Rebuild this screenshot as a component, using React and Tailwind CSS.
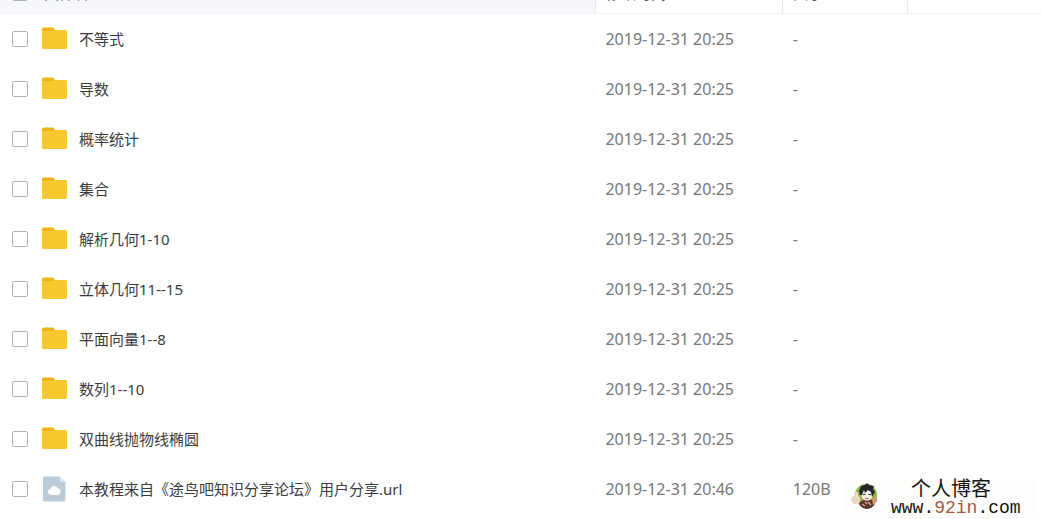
import React from 'react';

const files = [
  { name: '不等式', date: '2019-12-31 20:25', size: '-' },
  { name: '导数', date: '2019-12-31 20:25', size: '-' },
  { name: '概率统计', date: '2019-12-31 20:25', size: '-' },
  { name: '集合', date: '2019-12-31 20:25', size: '-' },
  { name: '解析几何1-10', date: '2019-12-31 20:25', size: '-' },
  { name: '立体几何11--15', date: '2019-12-31 20:25', size: '-' },
  { name: '平面向量1--8', date: '2019-12-31 20:25', size: '-' },
  { name: '数列1--10', date: '2019-12-31 20:25', size: '-' },
  { name: '双曲线抛物线椭圆', date: '2019-12-31 20:25', size: '-' },
  { name: '本教程来自《途鸟吧知识分享论坛》用户分享.url', date: '2019-12-31 20:46', size: '120B', type: 'url' },
];

const FolderIcon = () => (
  <svg className="w-[26px] h-[26px] shrink-0" viewBox="0 0 26 26" aria-hidden="true">
    <path d="M0 3.5Q0 1.5 2 1.5H10.5Q11.5 1.5 12.1 2.6L13 4.5V8H0Z" fill="#ecb50c" />
    <path d="M0 5H11.5L12.8 4H23.5Q25 4 25 5.5V21.5Q25 23 23.5 23H1.5Q0 23 0 21.5Z" fill="#f7c92c" />
  </svg>
);

const FileIcon = () => (
  <svg className="w-[26px] h-[26px] shrink-0" viewBox="0 0 26 26" aria-hidden="true">
    <path d="M1 2Q1 0.5 2.5 0.5H18L23.5 6V24Q23.5 25.5 22 25.5H2.5Q1 25.5 1 24Z" fill="#bccbd8" />
    <path d="M18 0.5L23.5 6H19.5Q18 6 18 4.5Z" fill="#dfe8ef" />
    <path d="M8.8 19A3.1 3.1 0 0 1 8.3 12.9A4.1 4.1 0 0 1 15.9 12.3A3.4 3.4 0 0 1 15.7 19Z" fill="#fff" />
  </svg>
);

const Checkbox = ({ label }) => (
  <input
    type="checkbox"
    aria-label={label}
    className="appearance-none size-4 shrink-0 rounded-[2px] border border-[#aeb3ba] bg-white checked:bg-blue-500"
  />
);

// Cartoon portrait in front of a green disc
const Avatar = () => (
  <svg className="w-7 h-7 shrink-0" viewBox="0 0 28 28" aria-hidden="true">
    <circle cx="15" cy="13" r="11" fill="#8fb63c" />
    <path d="M9 20Q14 16 22 18L24 22Q21 27 15 27Q10 26 8 22Z" fill="#58352b" />
    <path d="M21 17L26 15L26 20L22 23Z" fill="#d29a72" />
    <path d="M11 22L14 24M17 20L20 23M14 20L16 22" stroke="#d8a78d" strokeWidth="1.5" />
    <ellipse cx="16" cy="12.5" rx="5.8" ry="6.2" fill="#f3eeea" />
    <path d="M9 13L8 9L10 4L14 3L16 1L18 3L23 4L22 7L24 10L21 15L20 10L17 8L14 11L13 8L11 13Z" fill="#25262c" />
    <path d="M12 12.5H14.5M17.5 12.5H20" stroke="#303030" strokeWidth="1.2" />
    <path d="M14 16Q16 18 18 16" stroke="#a35d50" fill="none" />
    <path d="M4 10Q6 9 7 11L7 14Q10 15 9 19Q8 22 4 22Q0 20 1 16Q2 14 4 14Z" fill="#eee0cc" stroke="#cdbb9f" strokeWidth="0.6" />
    <path d="M2 17H7M2 19H7" stroke="#d8c5ac" strokeWidth="0.6" />
  </svg>
);

const Watermark = () => (
  <div className="absolute right-1 bottom-0 flex items-start w-[194px] h-10 pl-2 bg-[#fdfdfc]">
    <div className="pt-1">
      <Avatar />
    </div>
    <div className="flex flex-col pl-2 text-[#151515] whitespace-nowrap">
      <span className="pl-6 text-[20px] leading-5 font-[Noto_Sans_CJK_SC,sans-serif]">
        个人博客
      </span>
      <a href="http://www.92in.com" className="pl-1 text-[18px] leading-5 font-[Liberation_Mono,monospace]">
        www.<span className="text-[#9c5c44]">92in</span>.com
      </a>
    </div>
  </div>
);

const HeadCell = ({ children, className }) => (
  <div className={`flex items-end h-[13px] pb-[10px] overflow-hidden leading-5 ${className}`}>
    {children}
  </div>
);

const App = () => {
  return (
    <div className="relative bg-white pb-1 overflow-hidden font-[Noto_Sans,Noto_Sans_CJK_SC,sans-serif]">
      <table className="w-full table-fixed border-collapse text-left">
        <colgroup>
          <col className="w-[57.2%]" />
          <col className="w-[18%]" />
          <col className="w-[12%]" />
          <col />
        </colgroup>
        <thead className="text-[15px] text-[#54575e]">
          <tr className="border-b border-[#f0f2f6]">
            <th className="p-0 font-normal border-r border-[#e8eaef] bg-[#f7f8fc]">
              <HeadCell className="pl-3">
                <div className="flex items-center h-5 shrink-0">
                  <Checkbox label="全选" />
                  <span className="pl-4">文件名</span>
                </div>
              </HeadCell>
            </th>
            <th className="p-0 font-normal border-r border-[#e8eaef]">
              <HeadCell className="pl-[10px]">修改时间</HeadCell>
            </th>
            <th className="p-0 font-normal border-r border-[#e8eaef]">
              <HeadCell className="pl-[10px]">大小</HeadCell>
            </th>
            <th className="p-0" />
          </tr>
        </thead>
        <tbody>
          {files.map((file) => (
            <tr key={file.name} className="h-[50px]">
              <td className="p-0">
                <div className="flex items-center pl-3 text-[15px] leading-5 text-[#3c3c40]">
                  <Checkbox label={file.name} />
                  <span className="pl-3.5 shrink-0">
                    {file.type === 'url' ? <FileIcon /> : <FolderIcon />}
                  </span>
                  <span className="pl-[11px] truncate">{file.name}</span>
                </div>
              </td>
              <td className="p-0 pl-[10px] text-base leading-5 text-[#76777b] whitespace-nowrap">{file.date}</td>
              <td className="p-0 pl-[10px] text-base leading-5 text-[#76777b]">{file.size}</td>
              <td className="p-0" />
            </tr>
          ))}
        </tbody>
      </table>
      <Watermark />
    </div>
  );
};

export default App;
